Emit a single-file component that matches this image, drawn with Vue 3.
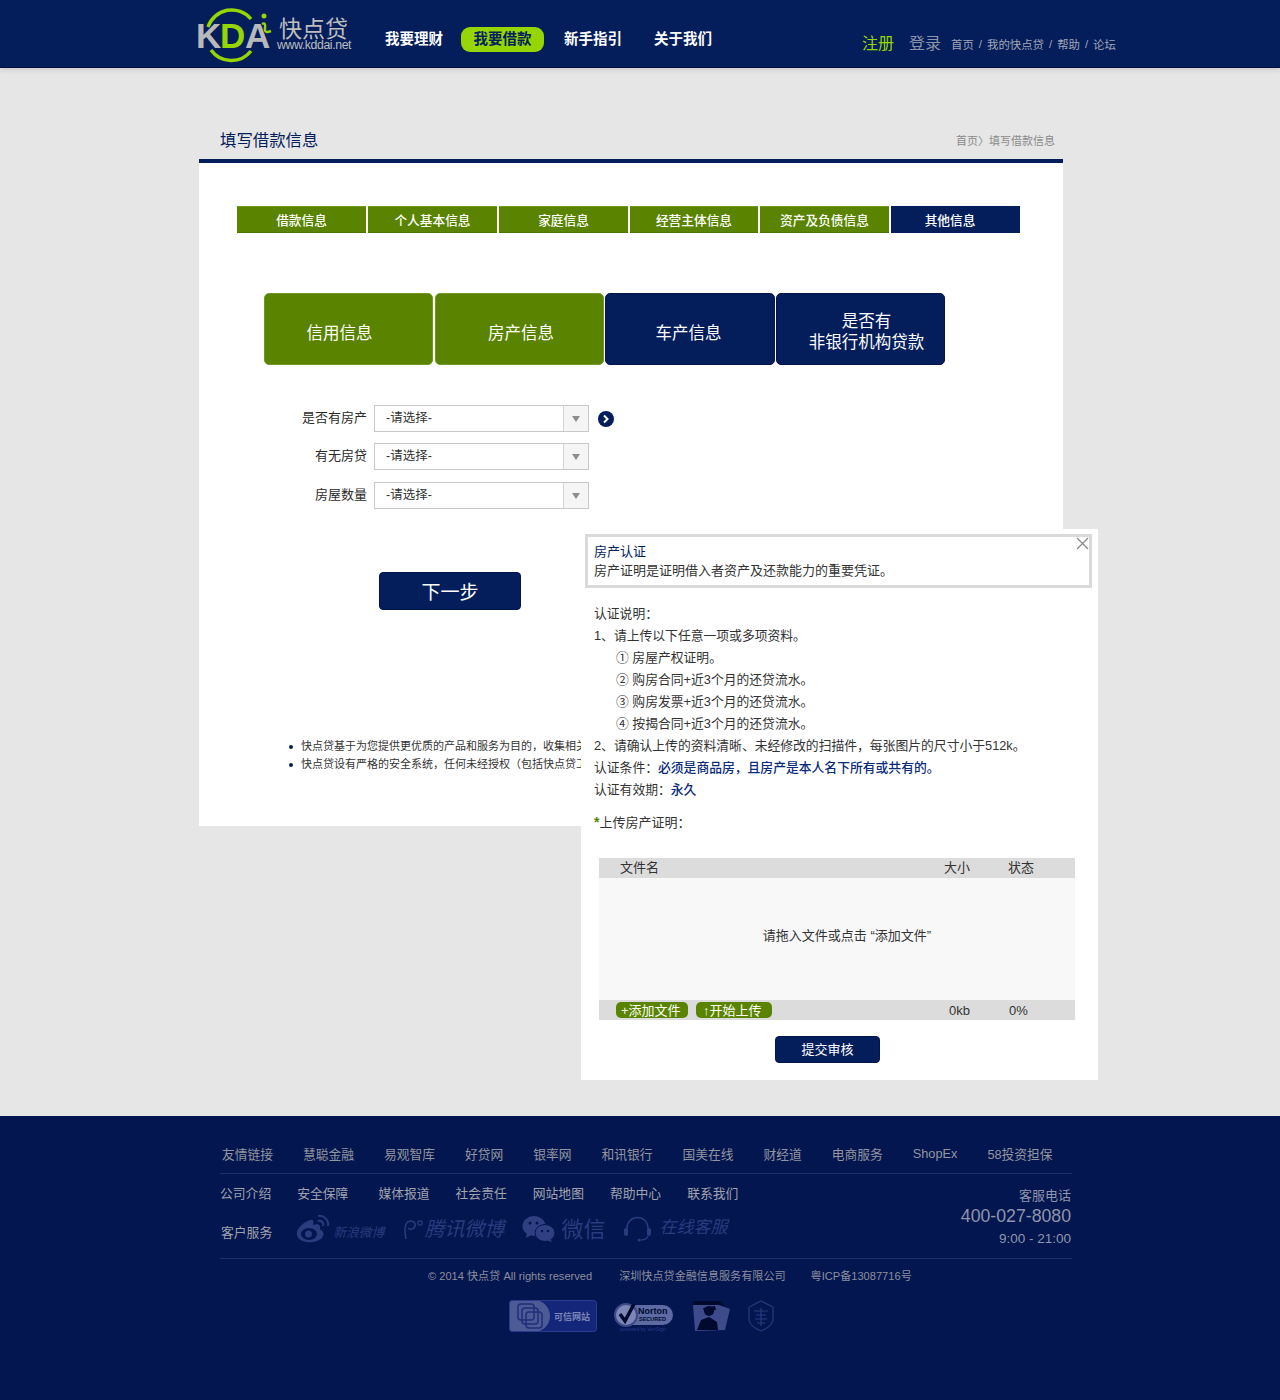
<template>
  <div class="app">
    <header class="top">
      <div class="top-inner">
        <div class="logo">
          <svg class="logo-mark" width="80" height="58" viewBox="0 0 80 58">
            <path d="M12 20 A25 25 0 0 1 55 12" fill="none" stroke="#95d600" stroke-width="3.5" />
            <path d="M15 43 A25 25 0 0 0 55 44" fill="none" stroke="#95d600" stroke-width="3.5" />
            <text x="0" y="41" class="kda">K</text>
            <text x="24" y="41" class="kda kda-d">D</text>
            <text x="49" y="41" class="kda">A</text>
            <circle cx="68" cy="9" r="2.500" fill="#95d600" />
            <path d="M66 17 Q70 15 69 21 Q68 27 75 24" fill="none" stroke="#95d600" stroke-width="2.500" />
          </svg>
          <div class="logo-text">
            <div class="logo-cn">快点贷</div>
            <div class="logo-url">www.kddai.net</div>
          </div>
        </div>
        <nav class="nav">
          <a v-for="item in navItems" :key="item" class="nav-item" :class="{ active: item === '我要借款' }">{{ item }}</a>
        </nav>
        <div class="top-right">
          <a class="reg">注册</a>
          <a class="login">登录</a>
          <div class="top-links">
            <span>首页</span><i>/</i><span>我的快点贷</span><i>/</i><span>帮助</span><i>/</i><span>论坛</span>
          </div>
        </div>
      </div>
    </header>

    <main class="page">
      <div class="title-row">
        <h1>填写借款信息</h1>
        <div class="crumb">首页〉填写借款信息</div>
      </div>
      <section class="card">
        <div class="steps">
          <div v-for="(s, i) in steps" :key="s" class="step" :class="{ current: i === steps.length - 1 }">{{ s }}</div>
        </div>
        <div class="tiles">
          <div class="tile green t1">信用信息</div>
          <div class="tile green t2">房产信息</div>
          <div class="tile t3">车产信息</div>
          <div class="tile t4">是否有<br />非银行机构贷款</div>
        </div>
        <div class="form">
          <div v-for="(f, i) in fields" :key="f" class="form-row">
            <label>{{ f }}</label>
            <div class="select">
              <span>-请选择-</span>
              <b class="select-arrow"></b>
            </div>
            <svg v-if="i === 0" class="go" width="16" height="16" viewBox="0 0 16 16">
              <circle cx="8" cy="8" r="8" fill="#041e5c" />
              <path d="M6 4.500 L9.500 8 L6 11.500" fill="none" stroke="#fff" stroke-width="2" />
            </svg>
          </div>
        </div>
        <button class="next">下一步</button>
        <ul class="notes">
          <li>快点贷基于为您提供更优质的产品和服务为目的，收集相关</li>
          <li>快点贷设有严格的安全系统，任何未经授权（包括快点贷工</li>
        </ul>
      </section>

      <aside class="popup">
        <div class="popup-head">
          <div class="popup-title">房产认证</div>
          <div>房产证明是证明借入者资产及还款能力的重要凭证。</div>
          <svg class="close" width="13" height="13" viewBox="0 0 13 13">
            <path d="M1 1 L12 12 M12 1 L1 12" stroke="#8a8a8a" stroke-width="1.200" fill="none" />
          </svg>
        </div>
        <div class="desc">
          <p>认证说明：</p>
          <p>1、请上传以下任意一项或多项资料。</p>
          <p v-for="m in materials" :key="m" class="indent">{{ m }}</p>
          <p>2、请确认上传的资料清晰、未经修改的扫描件，每张图片的尺寸小于512k。</p>
          <p>认证条件：<em>必须是商品房，且房产是本人名下所有或共有的。</em></p>
          <p>认证有效期：<em>永久</em></p>
        </div>
        <div class="upload-label"><span>*</span>上传房产证明：</div>
        <div class="uploader">
          <div class="up-row up-head">
            <span class="col-name">文件名</span>
            <span class="col-size">大小</span>
            <span class="col-state">状态</span>
          </div>
          <div class="drop">请拖入文件或点击 “添加文件”</div>
          <div class="up-row up-foot">
            <div class="col-name up-btns">
              <a class="mini add">+添加文件</a>
              <a class="mini start">↑开始上传</a>
            </div>
            <span class="col-size size-val">0kb</span>
            <span class="col-state state-val">0%</span>
          </div>
        </div>
        <button class="submit">提交审核</button>
      </aside>
    </main>

    <footer class="foot">
      <div class="foot-inner">
        <div class="friend">
          <a v-for="l in friends" :key="l">{{ l }}</a>
        </div>
        <div class="service">
          <div class="service-left">
            <div class="links">
              <a v-for="l in companyLinks" :key="l">{{ l }}</a>
            </div>
            <div class="social">
              <span class="cs-label">客户服务</span>
              <div class="s-item weibo">
                <svg width="34" height="30" viewBox="0 0 34 30">
                  <path d="M14 6 C6 9 0 15 1 21 C2 27 10 29 17 28 C25 27 29 22 27 18 C26 16 24 15.500 24 15 C25 11 22 9 17 11 C18 6 17 5 14 6 Z" fill="#2a3b7e" />
                  <ellipse cx="13" cy="20" rx="8" ry="6" fill="#03164f" />
                  <circle cx="12.500" cy="20" r="3.500" fill="#2a3b7e" />
                  <path d="M22 2 C28 1 33 6 32 12 M22 7 C25 6 28 8 27 12" fill="none" stroke="#2a3b7e" stroke-width="2" />
                </svg>
                <span class="s-small">新浪微博</span>
              </div>
              <div class="s-item tencent">
                <svg width="22" height="24" viewBox="0 0 22 24">
                  <path d="M4 22 C3 16 2 12 4 7 C6 3 12 3 13 7 C14 11 9 14 6 11" fill="none" stroke="#2a3b7e" stroke-width="1.500" />
                  <circle cx="18" cy="6" r="2.200" fill="none" stroke="#2a3b7e" stroke-width="1.200" />
                </svg>
                <span class="s-big">腾讯微博</span>
              </div>
              <div class="s-item wechat">
                <svg width="34" height="28" viewBox="0 0 34 28">
                  <ellipse cx="12" cy="11" rx="11.500" ry="10" fill="#2f3f82" />
                  <path d="M5 17 L4 23 L11 19 Z" fill="#2f3f82" />
                  <ellipse cx="23" cy="18" rx="10" ry="8.500" fill="#2f3f82" stroke="#03164f" stroke-width="1" />
                  <path d="M28 23 L30 27 L24 25 Z" fill="#2f3f82" />
                  <circle cx="8" cy="8" r="1.500" fill="#03164f" />
                  <circle cx="15" cy="8" r="1.500" fill="#03164f" />
                  <circle cx="20" cy="16" r="1.300" fill="#03164f" />
                  <circle cx="26" cy="16" r="1.300" fill="#03164f" />
                </svg>
                <span class="s-wx">微信</span>
              </div>
              <div class="s-item online">
                <svg width="29" height="28" viewBox="0 0 29 28">
                  <path d="M4 16 V13 A10.500 10.500 0 0 1 25 13 V16" fill="none" stroke="#2a3b7e" stroke-width="1.500" />
                  <rect x="1" y="13" width="4" height="8" rx="2" fill="#2a3b7e" />
                  <rect x="24" y="13" width="4" height="8" rx="2" fill="#2a3b7e" />
                  <path d="M25 21 C24 24 21 25 17 25" fill="none" stroke="#2a3b7e" stroke-width="1.200" />
                  <circle cx="16" cy="25" r="1.500" fill="#2a3b7e" />
                </svg>
                <span class="s-mid">在线客服</span>
              </div>
            </div>
          </div>
          <div class="contact">
            <div class="c-label">客服电话</div>
            <div class="c-tel">400-027-8080</div>
            <div class="c-time">9:00 - 21:00</div>
          </div>
        </div>
        <div class="copy">
          <span class="c1">© 2014 快点贷 All rights reserved</span>
          <span class="c2">深圳快点贷金融信息服务有限公司</span>
          <span>粤ICP备13087716号</span>
        </div>
        <div class="badges">
          <div class="b-trust">
            <div class="b-trust-left">
              <svg width="26" height="26" viewBox="0 0 26 26">
                <rect x="1" y="1" width="16" height="16" rx="3" fill="none" stroke="#1f2f78" stroke-width="1.500" />
                <rect x="9" y="9" width="16" height="16" rx="3" fill="none" stroke="#1f2f78" stroke-width="1.500" />
                <rect x="5" y="5" width="16" height="16" rx="3" fill="none" stroke="#1f2f78" stroke-width="1.500" />
              </svg>
            </div>
            <span>可信网站</span>
          </div>
          <div class="b-norton">
            <svg width="60" height="34" viewBox="0 0 60 34">
              <rect x="1" y="5" width="58" height="20" rx="10" fill="#5d6aa3" />
              <circle cx="12" cy="15" r="11" fill="#7c87b6" stroke="#3c4a8c" stroke-width="2" />
              <path d="M6 14 L11 21 L20 4" fill="none" stroke="#00092e" stroke-width="3.500" />
            </svg>
            <span class="n-1">Norton</span>
            <span class="n-2">SECURED</span>
            <span class="n-3">powered by VeriSign</span>
          </div>
          <svg class="b-police" width="40" height="32" viewBox="0 0 40 32">
            <path d="M2 1 H30 L33 6 L2 6 Z" fill="#00092e" />
            <path d="M2 5 L28 5 L39 9 L34 30 L4 31 Z" fill="#3d4b8d" />
            <path d="M6 30 L10 20 L18 17 L26 22 L27 30 Z" fill="#00092e" />
            <circle cx="18" cy="11" r="5" fill="#00092e" />
            <path d="M12 8 L24 6 L25 10 L13 11 Z" fill="#00092e" />
          </svg>
          <svg class="b-shield" width="26" height="32" viewBox="0 0 26 32">
            <path d="M13 1 L25 7 V20 C24 26 18 29 13 31 C8 29 2 26 1 20 V7 Z" fill="none" stroke="#2a3b7e" stroke-width="1.200" />
            <path d="M6 11 H20 M8 15 H18 M7 19 H19 M13 8 V26 M9 23 H17" stroke="#2a3b7e" stroke-width="1.200" fill="none" />
          </svg>
        </div>
      </div>
    </footer>
  </div>
</template>

<script setup>
const navItems = ["我要理财", "我要借款", "新手指引", "关于我们"];
const steps = ["借款信息", "个人基本信息", "家庭信息", "经营主体信息", "资产及负债信息", "其他信息"];
const fields = ["是否有房产", "有无房贷", "房屋数量"];
const materials = [
  "① 房屋产权证明。",
  "② 购房合同+近3个月的还贷流水。",
  "③ 购房发票+近3个月的还贷流水。",
  "④ 按揭合同+近3个月的还贷流水。"
];
const friends = ["友情链接", "慧聪金融", "易观智库", "好贷网", "银率网", "和讯银行", "国美在线", "财经道", "电商服务", "ShopEx", "58投资担保"];
const companyLinks = ["公司介绍", "安全保障", "媒体报道", "社会责任", "网站地图", "帮助中心", "联系我们"];
</script>

<style>
body {
  background: #e6e6e6;
}
</style>

<style scoped>
.app {
  width: 1280px;
  font-family: "Liberation Sans", "Noto Sans CJK SC", sans-serif;
  font-size: 13px;
  color: #333;
}

p,
h1,
ul {
  margin: 0;
  padding: 0;
}

.top {
  height: 68px;
  background: #041e5c;
  border-bottom: 1px solid #00103a;
  box-sizing: border-box;
  box-shadow: 0 2px 5px rgba(0, 0, 0, 0.12);
  position: relative;
}

.top-inner {
  display: flex;
  align-items: flex-start;
  height: 67px;
  padding-left: 196px;
}

.logo {
  display: flex;
  width: 189px;
  padding-top: 7px;
}

.logo-mark {
  flex: none;
}

.kda {
  font-family: "Liberation Sans", sans-serif;
  font-size: 35px;
  font-weight: 700;
  fill: #b9b9b9;
}

.kda-d {
  fill: #95d600;
}

.logo-text {
  margin-left: 1px;
  color: #bdbdbd;
}

.logo-cn {
  font-size: 23px;
  line-height: 22px;
  margin-top: 11px;
  padding-left: 2px;
}

.logo-url {
  font-size: 12.300px;
  line-height: 11px;
  letter-spacing: -0.4px;
}

.nav {
  display: flex;
  align-items: flex-start;
  height: 25px;
  margin-top: 27px;
}

.nav-item {
  font-size: 14.500px;
  font-weight: 700;
  line-height: 24px;
  color: #fff;
  width: 58px;
  text-align: center;
  white-space: nowrap;
  margin-right: 18px;
}

.nav-item:nth-child(3) {
  margin-right: 32px;
}

.nav-item:nth-child(2) {
  width: 83px;
  margin-right: 20px;
}

.nav-item.active {
  line-height: 25px;
  background: #95d600;
  color: #041e5c;
  border-radius: 9px;
}

.top-right {
  display: flex;
  align-items: center;
  height: 24px;
  margin-left: 132px;
  margin-top: 30px;
}

.reg,
.login {
  font-size: 16px;
  white-space: nowrap;
}

.reg {
  color: #95d600;
  margin-right: 15px;
}

.login {
  color: #8d93a8;
  margin-right: 10px;
}

.top-links {
  display: flex;
  gap: 4px;
  font-size: 11.400px;
  color: #a2a6b5;
  white-space: nowrap;
  margin-top: 4px;
}

.top-links i {
  font-style: normal;
  margin: 2px 1px 0;
}

.page {
  position: relative;
  height: 1048px;
  padding: 60px 217px 0 199px;
  box-sizing: border-box;
}

.title-row {
  display: flex;
  align-items: center;
  justify-content: space-between;
  height: 31px;
  padding: 0 8px 6px 21px;
  box-sizing: border-box;
  width: 864px;
}

.title-row h1 {
  font-size: 16.400px;
  font-weight: 400;
  color: #041e5c;
  margin-bottom: 3px;
}

.crumb {
  font-size: 11px;
  color: #8a8a8a;
  margin-bottom: 1px;
}

.card {
  width: 864px;
  height: 667px;
  box-sizing: border-box;
  background: #fff;
  border-top: 4px solid #041e5c;
  padding: 43px 0 0 38px;
}

.steps {
  display: flex;
  gap: 2px;
}

.step {
  width: 129px;
  height: 27px;
  line-height: 28px;
  text-align: center;
  color: #fff;
  font-size: 12.700px;
  font-weight: 500;
  background: #5a8400;
  border-top: 1px solid #6f9a1e;
  border-bottom: 1px solid #4d7300;
  box-sizing: border-box;
}

.step:nth-child(4) {
  width: 128px;
}

.step.current {
  background: #041e5c;
  border-color: #041e5c;
  padding-right: 11px;
}

.tiles {
  display: flex;
  gap: 2px;
  margin: 60px 0 0 27px;
}

.tile {
  width: 169px;
  height: 72px;
  box-sizing: border-box;
  display: flex;
  align-items: center;
  justify-content: center;
  text-align: center;
  color: #fff;
  font-size: 16.500px;
  line-height: 21px;
  background: #041e5c;
  border: 1px solid #02154a;
  border-radius: 5px;
}

.tile.green {
  background: #5a8400;
  border-color: #6f9a1e;
}

.t1 {
  padding: 8px 18px 0 0;
}

.t2 {
  padding: 8px 0 0 3px;
}

.t3 {
  margin-left: -1px;
  width: 170px;
  padding: 8px 3px 0 0;
}

.t4 {
  margin-left: -1px;
  padding: 6px 0 0 12px;
}

.form {
  display: flex;
  flex-direction: column;
  gap: 11px;
  margin: 40px 0 0 0;
}

.form-row {
  display: flex;
  align-items: center;
  height: 27px;
}

.form-row:last-child {
  margin-top: 1px;
}

.form-row label {
  width: 130px;
  text-align: right;
  color: #2b2b2b;
  margin: -4px 7px 0 0;
}

.select {
  width: 215px;
  height: 27px;
  box-sizing: border-box;
  display: flex;
  align-items: center;
  justify-content: space-between;
  border: 1px solid #c9c9c9;
  padding-left: 11px;
  position: relative;
  line-height: 22px;
  font-size: 12.500px;
}

.select span {
  margin-top: -2px;
}

.select-arrow {
  width: 24px;
  height: 25px;
  background: #f5f5f5;
  border-left: 1px solid #d5d5d5;
  position: relative;
}

.select-arrow::after {
  content: "";
  position: absolute;
  left: 8px;
  top: 10px;
  border-left: 4px solid transparent;
  border-right: 4px solid transparent;
  border-top: 6px solid #8d8d8d;
}

.go {
  margin: 1px 0 0 9px;
}

.next {
  display: block;
  width: 142px;
  height: 38px;
  margin: 63px 0 0 142px;
  padding: 0 0 2px;
  background: #041e5c;
  border: 1px solid #02154a;
  border-radius: 4px;
  color: #fff;
  font-family: inherit;
  font-size: 19px;
}

.notes {
  list-style: none;
  margin: 127px 0 0 51px;
  font-size: 11px;
  line-height: 18px;
  color: #333;
  white-space: nowrap;
}

.notes li {
  position: relative;
  padding-left: 13px;
}

.notes li::before {
  content: "";
  position: absolute;
  left: 1px;
  top: 8px;
  width: 4px;
  height: 4px;
  border-radius: 50%;
  background: #041e5c;
}

.popup {
  position: absolute;
  left: 581px;
  top: 461px;
  width: 517px;
  height: 551px;
  box-sizing: border-box;
  background: #fff;
  padding: 5px 6px 0 4px;
}

.popup-head {
  position: relative;
  height: 54px;
  box-sizing: border-box;
  border: 3px solid #dadada;
  padding: 5px 6px;
  line-height: 19px;
  color: #333;
}

.popup-title {
  color: #041e5c;
}

.close {
  position: absolute;
  right: 0;
  top: 0;
}

.desc {
  margin: 15px 0 0 9px;
  line-height: 22px;
  font-size: 12.800px;
}

.desc em {
  font-style: normal;
  color: #0a2a7a;
  font-weight: 500;
}

.indent {
  padding-left: 22px;
}

.upload-label {
  margin: 10px 0 0 9px;
  line-height: 22px;
  white-space: nowrap;
}

.upload-label span {
  color: #5a8400;
  font-weight: 700;
  font-size: 14px;
}

.uploader {
  width: 476px;
  margin: 24px 0 0 14px;
  background: #f8f8f8;
}

.up-row {
  display: flex;
  align-items: flex-start;
  height: 20px;
  background: #dcdcdc;
  line-height: 22px;
}

.up-head {
  line-height: 20px;
}

.col-name {
  width: 345px;
  padding-left: 21px;
  box-sizing: border-box;
}

.col-size {
  width: 64px;
}

.drop {
  height: 122px;
  line-height: 115px;
  text-align: center;
  padding-left: 20px;
  box-sizing: border-box;
}

.up-btns {
  display: flex;
  gap: 8px;
  padding-left: 17px;
}

.mini {
  height: 16px;
  line-height: 17px;
  margin-top: 2px;
  box-sizing: border-box;
  padding: 0 0 0 5px;
  background: #5a8400;
  color: #fff;
  border-radius: 5px;
  white-space: nowrap;
  font-size: 13px;
}

.add {
  width: 72px;
}

.start {
  width: 76px;
  padding-left: 7px;
}

.size-val {
  padding-left: 5px;
  box-sizing: border-box;
}

.state-val {
  padding-left: 1px;
}

.submit {
  display: block;
  width: 105px;
  height: 27px;
  margin: 16px 0 0 190px;
  padding: 0 0 3px;
  background: #041e5c;
  border: 1px solid #02154a;
  border-radius: 4px;
  color: #fff;
  font-family: inherit;
  font-size: 13px;
}

.foot {
  height: 284px;
  background: #03164f;
  color: #93959f;
}

.foot-inner {
  width: 852px;
  margin-left: 220px;
  box-sizing: border-box;
}

.friend {
  display: flex;
  gap: 30px;
  height: 58px;
  align-items: center;
  padding: 17px 0 0 2px;
  box-sizing: border-box;
  border-bottom: 1px solid #1a2f70;
  white-space: nowrap;
  font-size: 12.750px;
}

.service {
  display: flex;
  justify-content: space-between;
  height: 84px;
  border-bottom: 1px solid #1a2f70;
}

.links {
  display: flex;
  gap: 26px;
  height: 36px;
  align-items: center;
  font-size: 12.800px;
  color: #a0a2ad;
}

.links a:nth-child(2) {
  margin-right: 4px;
}

.social {
  display: flex;
  align-items: center;
  height: 38px;
}

.cs-label {
  font-size: 12.800px;
  color: #a0a2ad;
  margin: 4px 24px 0 1px;
}

.s-item {
  display: flex;
  align-items: center;
  color: #2a3b7e;
  white-space: nowrap;
}

.weibo,
.tencent,
.wechat {
  margin-right: 18px;
}

.s-small {
  font-size: 12.800px;
  font-style: italic;
  margin: 5px 0 0 3px;
}

.s-big {
  font-size: 20px;
  font-style: italic;
  margin-top: -4px;
}

.s-wx {
  font-size: 22px;
  margin: -5px 0 0 5px;
}

.s-mid {
  font-size: 17px;
  font-style: italic;
  margin: -7px 0 0 7px;
}

.contact {
  text-align: right;
  padding: 13px 1px 0 0;
  color: #8f95ac;
}

.c-label {
  line-height: 17px;
}

.c-tel {
  font-size: 17.700px;
  line-height: 24px;
}

.c-time {
  font-size: 13.500px;
  line-height: 21px;
}

.copy {
  display: flex;
  height: 31px;
  align-items: center;
  padding-left: 208px;
  font-size: 11.100px;
  white-space: nowrap;
  color: #8c8e9e;
}

.c1 {
  margin-right: 27px;
}

.c2 {
  margin-right: 25px;
}

.badges {
  display: flex;
  align-items: flex-start;
  gap: 17px;
  padding: 10px 0 0 289px;
}

.b-trust {
  display: flex;
  width: 88px;
  height: 32px;
  background: #14267a;
  border: 1px solid #2a3b8e;
  border-radius: 3px;
  box-sizing: border-box;
  overflow: hidden;
  align-items: center;
  font-size: 9px;
  font-weight: 700;
  color: #7c87b6;
  white-space: nowrap;
}

.b-trust-left {
  width: 40px;
  height: 32px;
  flex: none;
  display: flex;
  align-items: center;
  justify-content: center;
  background: #4c5a96;
  border-radius: 0 16px 16px 0;
  margin-right: 4px;
}

.b-norton {
  position: relative;
  width: 60px;
  height: 34px;
}

.n-1,
.n-2,
.n-3 {
  position: absolute;
  left: 24px;
  white-space: nowrap;
  color: #00092e;
  font-weight: 700;
  line-height: 1;
}

.n-1 {
  top: 7px;
  font-size: 9px;
}

.n-2 {
  top: 17px;
  font-size: 5.500px;
  left: 25px;
}

.n-3 {
  left: 6px;
  top: 27px;
  font-size: 5px;
  color: #2a3b8e;
  font-weight: 400;
}
</style>
